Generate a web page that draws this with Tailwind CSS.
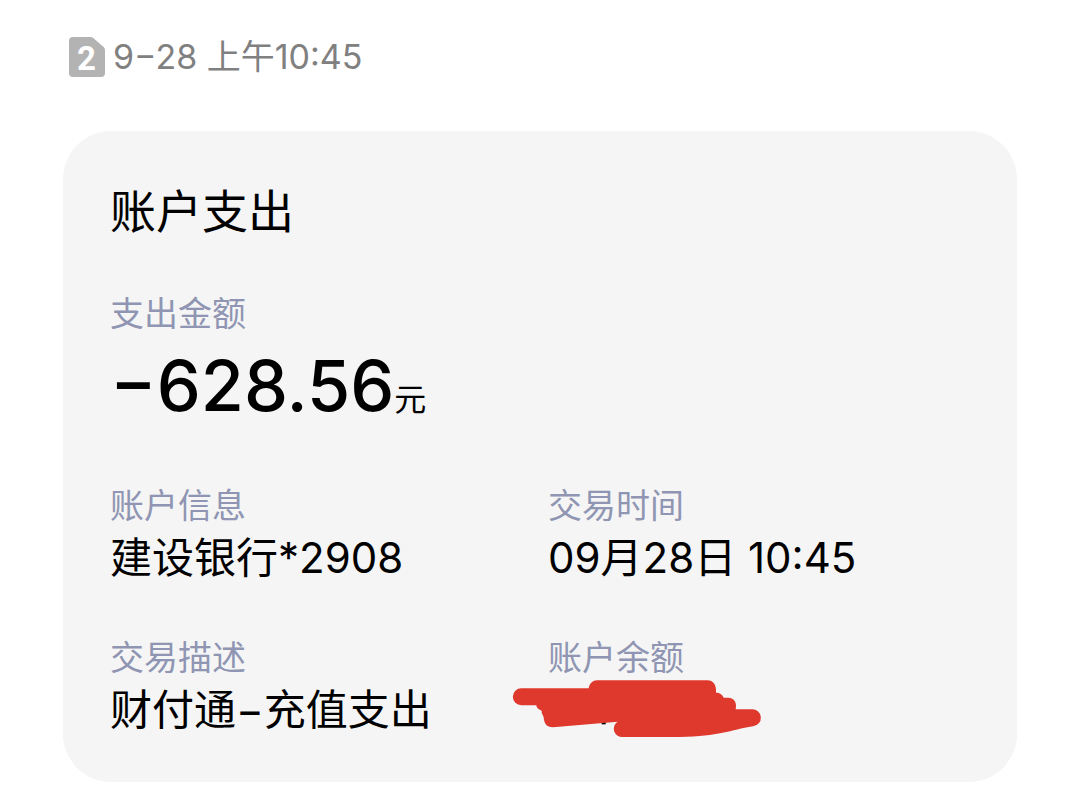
<!DOCTYPE html>
<html lang="zh-CN">
<head>
  <meta charset="UTF-8">
  <meta name="viewport" content="width=device-width, initial-scale=1.0">
  <title>账户支出</title>
  <script src="https://cdn.jsdelivr.net/npm/@tailwindcss/browser@4"></script>
</head>
<body class="bg-white font-['Inter','Noto_Sans_CJK_SC',sans-serif] text-black">
  <header class="flex items-center gap-2 px-[69px] pt-8 text-[#808080]">
    <svg class="h-10 w-9 shrink-0" viewBox="0 0 36 40" role="img" aria-label="SIM 2">
      <path fill="#b3b3b3" d="M4 0H21.500Q23 0 24.200 1L34.600 10Q36 11.200 36 13V36Q36 40 32 40H4Q0 40 0 36V4Q0 0 4 0Z" />
      <text x="17.500" y="33" text-anchor="middle" font-family="Roboto" font-size="33" font-weight="700" fill="#fff">2</text>
    </svg>
    <time class="text-[34px] leading-[50px]">9−28 上午10:45</time>
  </header>

  <main class="mx-[63px] mt-[49px] mb-5 rounded-[48px] bg-[#f5f5f5] px-[47px] pt-12 pb-[42px]">
    <h1 class="text-[46px] leading-16">账户支出</h1>

    <dl class="mt-[49px]">
      <dt class="text-[34px] leading-11 text-[#8f95b2]">支出金额</dt>
      <dd class="text-[70px] leading-[100px] font-medium">−628.56<span class="text-[32px] leading-none font-normal">元</span></dd>
    </dl>

    <dl class="mt-12 grid grid-cols-2 gap-x-4 gap-y-12">
      <div>
        <dt class="text-[34px] leading-11 text-[#8f95b2]">账户信息</dt>
        <dd class="text-[42px] leading-[60px]">建设银行*2908</dd>
      </div>
      <div>
        <dt class="text-[34px] leading-11 text-[#8f95b2]">交易时间</dt>
        <dd class="text-[42px] leading-[60px]">09月28日 10:45</dd>
      </div>
      <div>
        <dt class="text-[34px] leading-11 text-[#8f95b2]">交易描述</dt>
        <dd class="text-[42px] leading-[60px]">财付通−充值支出</dd>
      </div>
      <div>
        <dt class="text-[34px] leading-11 text-[#8f95b2]">账户余额</dt>
        <dd class="relative h-[60px]">
          <!-- balance is scribbled over -->
          <svg class="absolute top-0 -left-9 h-[58px] w-[250px]" viewBox="-3 0 750 174" aria-hidden="true">
            <path fill="#000" d="M266 120H278V133H266Z" />
            <path fill="#df382c" d="M25 25H227C229 10 240 1 252 1H583C601 1 611 15 609 38C620 38 629 44 632 53H645C665 54 672 68 668 88H716A25.500 25.500 0 0 1 720 139C650 150 620 170 500 171H330A25 25 0 0 1 314 125L120 142C100 142 93 130 92 112L86 98V92C75 88 70 82 70 76H25A25 25 0 0 1 25 25Z" />
          </svg>
        </dd>
      </div>
    </dl>
  </main>
</body>
</html>
